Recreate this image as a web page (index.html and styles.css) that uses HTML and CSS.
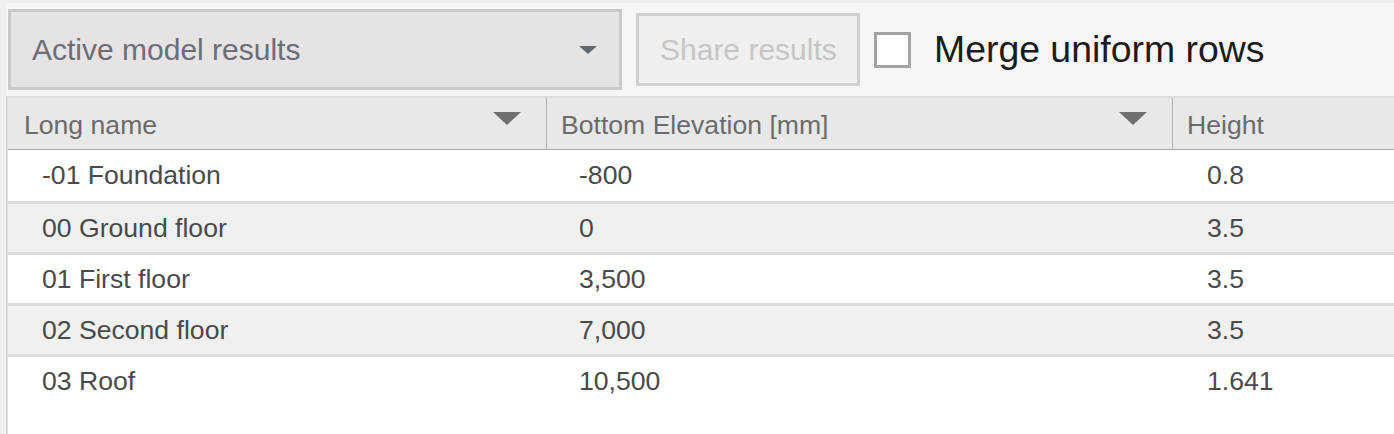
FILE: index.html
```html
<!DOCTYPE html>
<html lang="en">
<head>
<meta charset="utf-8">
<title>Results</title>
<link rel="stylesheet" href="styles.css">
</head>
<body>
<div class="app">
  <div class="toolbar">
    <div class="select">
      <span class="select-label">Active model results</span>
      <span class="select-arrow"></span>
    </div>
    <button class="share" disabled>Share results</button>
    <label class="merge">
      <span class="checkbox"></span>
      <span class="merge-text">Merge uniform rows</span>
    </label>
  </div>
  <div class="table">
    <div class="row head">
      <div class="cell c1">Long name<span class="sort"></span></div>
      <div class="cell c2">Bottom Elevation [mm]<span class="sort"></span></div>
      <div class="cell c3">Height</div>
    </div>
    <div class="row first">
      <div class="cell c1">-01 Foundation</div>
      <div class="cell c2">-800</div>
      <div class="cell c3">0.8</div>
    </div>
    <div class="row alt">
      <div class="cell c1">00 Ground floor</div>
      <div class="cell c2">0</div>
      <div class="cell c3">3.5</div>
    </div>
    <div class="row">
      <div class="cell c1">01 First floor</div>
      <div class="cell c2">3,500</div>
      <div class="cell c3">3.5</div>
    </div>
    <div class="row alt">
      <div class="cell c1">02 Second floor</div>
      <div class="cell c2">7,000</div>
      <div class="cell c3">3.5</div>
    </div>
    <div class="row">
      <div class="cell c1">03 Roof</div>
      <div class="cell c2">10,500</div>
      <div class="cell c3">1.641</div>
    </div>
  </div>
</div>
</body>
</html>
```

FILE: styles.css
```css
* { box-sizing: border-box; }
html, body {
  margin: 0;
  padding: 0;
  width: 1394px;
  height: 434px;
  overflow: hidden;
  background: #efefef;
  font-family: "Liberation Sans", Arial, sans-serif;
}
.app {
  padding: 3px 0 0 6px;
  height: 434px;
  display: flex;
  flex-direction: column;
}
.toolbar {
  height: 93px;
  flex: none;
  background: #f6f6f6;
  display: flex;
  align-items: center;
  padding-left: 2px;
}
.select {
  width: 614px;
  height: 81px;
  border: 3px solid #c9c9c9;
  background: #e5e3e4;
  display: flex;
  align-items: center;
  justify-content: space-between;
  padding: 0 22px 0 21px;
}
.select-label {
  font-size: 30px;
  color: #6b6e74;
}
.select-arrow {
  width: 0;
  height: 0;
  border-left: 9px solid transparent;
  border-right: 9px solid transparent;
  border-top: 8px solid #62676e;
}
.share {
  margin-left: 14px;
  width: 224px;
  height: 73px;
  border: 3px solid #cfcfcf;
  background: #efefef;
  color: #c6c6c6;
  font-family: inherit;
  font-size: 30px;
  text-align: left;
  padding: 0 0 0 21px;
}
.merge {
  display: flex;
  align-items: center;
  margin-left: 14px;
}
.checkbox {
  width: 37px;
  height: 36px;
  border: 3px solid #a3a3a3;
  background: #ffffff;
}
.merge-text {
  margin-left: 23px;
  font-size: 37.4px;
  color: #1b1b1b;
}
.table {
  flex: 1;
  border-left: 2px solid #dadada;
  background: #ffffff;
  font-size: 26.6px;
}
.row {
  display: grid;
  grid-template-columns: 539px 626px 1fr;
  height: 51px;
  border-top: 3px solid #dcdcdc;
  color: #4a4a4a;
  background: #ffffff;
}
.row.alt { background: #f0f0f0; }
.row.first { border-top: 0; }
.cell {
  display: flex;
  align-items: center;
  white-space: nowrap;
}
.row .c1 { padding-left: 34px; }
.row .c2 { padding-left: 32px; }
.row .c3 { padding-left: 34px; }
.row.head {
  height: 54px;
  border-top: 2px solid #dedede;
  border-bottom: 1px solid #a9a9a9;
  background: #e8e8e8;
  color: #6b6b6b;
}
.row.head .cell {
  position: relative;
  padding-top: 4px;
}
.row.head .c1 { padding-left: 16px; border-right: 1px solid #b3b3b3; }
.row.head .c2 { padding-left: 14px; border-right: 1px solid #b3b3b3; }
.row.head .c3 { padding-left: 14px; }
.sort {
  position: absolute;
  right: 25px;
  top: 14px;
  width: 0;
  height: 0;
  border-left: 14px solid transparent;
  border-right: 14px solid transparent;
  border-top: 13px solid #707070;
}
```
